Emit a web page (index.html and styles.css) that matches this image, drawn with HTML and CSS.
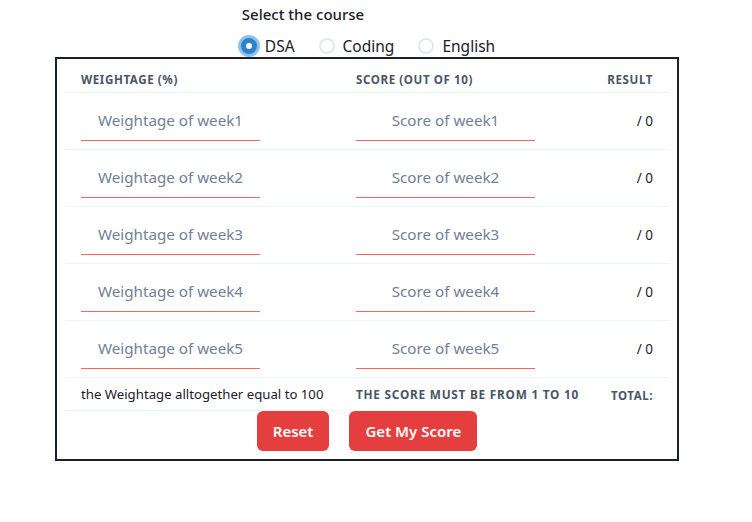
FILE: index.html
```html
<!DOCTYPE html>
<html lang="en">
<head>
<meta charset="utf-8">
<title>Score</title>
<link rel="stylesheet" href="styles.css">
</head>
<body>
<div class="page">
  <div class="course">
    <p class="course-title">Select the course</p>
    <div class="radios">
      <label class="radio"><span class="dot checked"></span><span>DSA</span></label>
      <label class="radio"><span class="dot"></span><span>Coding</span></label>
      <label class="radio"><span class="dot"></span><span>English</span></label>
    </div>
  </div>
  <div class="box">
    <table class="grid">
      <thead>
        <tr>
          <th class="c1">Weightage (%)</th>
          <th class="c2">Score (out of 10)</th>
          <th class="c3">Result</th>
        </tr>
      </thead>
      <tbody>
        <tr>
          <td><input class="field" placeholder="Weightage of week1"></td>
          <td><input class="field" placeholder="Score of week1"></td>
          <td class="res">/ 0</td>
        </tr>
        <tr>
          <td><input class="field" placeholder="Weightage of week2"></td>
          <td><input class="field" placeholder="Score of week2"></td>
          <td class="res">/ 0</td>
        </tr>
        <tr>
          <td><input class="field" placeholder="Weightage of week3"></td>
          <td><input class="field" placeholder="Score of week3"></td>
          <td class="res">/ 0</td>
        </tr>
        <tr>
          <td><input class="field" placeholder="Weightage of week4"></td>
          <td><input class="field" placeholder="Score of week4"></td>
          <td class="res">/ 0</td>
        </tr>
        <tr>
          <td><input class="field" placeholder="Weightage of week5"></td>
          <td><input class="field" placeholder="Score of week5"></td>
          <td class="res">/ 0</td>
        </tr>
      </tbody>
      <tfoot>
        <tr>
          <td class="note">the Weightage alltogether equal to 100</td>
          <td class="rule">The score must be from 1 to 10</td>
          <td class="total">Total:</td>
        </tr>
      </tfoot>
    </table>
    <div class="actions">
      <button class="btn">Reset</button>
      <button class="btn">Get My Score</button>
    </div>
  </div>
</div>
</body>
</html>
```

FILE: styles.css
```css
* { box-sizing: border-box; }
html, body { margin: 0; padding: 0; background: #fff; }
body {
  font-family: "Noto Sans", "Open Sans", sans-serif;
  color: #1a202c;
}
.page {
  width: 734px;
  display: flex;
  flex-direction: column;
  align-items: center;
}
.course {
  display: flex;
  flex-direction: column;
  align-items: flex-start;
  margin-top: 3px;
}
.course-title {
  margin: 0 0 0 3px;
  font-size: 15px;
  font-weight: 500;
  line-height: 22px;
}
.radios {
  display: flex;
  gap: 22px;
  margin-top: 11px;
  height: 20px;
  align-items: center;
}
.radio {
  display: flex;
  align-items: center;
  gap: 8px;
  font-size: 15.5px;
}
.dot {
  width: 16px;
  height: 16px;
  border-radius: 50%;
  border: 2px solid #e2e8f0;
  background: #fff;
  margin-left: 2px;
}
.dot.checked {
  background: #3182ce;
  border-color: #3182ce;
  box-shadow: 0 0 0 3px rgba(66, 153, 225, 0.6);
  position: relative;
}
.dot.checked::after {
  content: "";
  position: absolute;
  left: 50%;
  top: 50%;
  width: 6px;
  height: 6px;
  margin: -3px 0 0 -3px;
  border-radius: 50%;
  background: #fff;
}
.box {
  margin-top: 1px;
  width: 624px;
  border: 2px solid #1a202c;
  padding: 0 8px 8px;
  display: flex;
  flex-direction: column;
  align-items: center;
}
.grid {
  width: 604px;
  border-collapse: collapse;
  table-layout: fixed;
}
.grid th {
  font-size: 11.6px;
  font-weight: 700;
  text-transform: uppercase;
  letter-spacing: 0.05em;
  color: #4a5568;
  height: 33px;
  padding: 8px 16px 0;
  border-bottom: 1px solid #edf2f7;
  white-space: nowrap;
}
.c1 { width: 275px; text-align: left; }
.c2 { width: 250px; text-align: left; }
.c3 { text-align: right; }
.grid td {
  padding: 8px 16px;
  border-bottom: 1px solid #edf2f7;
  height: 57px;
}
.field {
  display: block;
  width: 179px;
  height: 40px;
  border: 0;
  border-bottom: 1px solid #f56565;
  font-family: inherit;
  font-size: 15.2px;
  text-align: center;
  background: transparent;
  padding: 0;
  outline: none;
}
.field::placeholder { color: #718096; }
.res {
  text-align: right;
  font-size: 13.5px;
}
.grid tfoot td {
  height: 33px;
  padding: 0 16px;
}
.grid tfoot td.rule, .grid tfoot td.total { border-bottom: 0; }
.note { font-size: 13.2px; white-space: nowrap; }
.rule {
  font-size: 11.8px;
  font-weight: 700;
  text-transform: uppercase;
  letter-spacing: 0.065em;
  color: #4a5568;
  white-space: nowrap;
}
.total {
  font-size: 11.5px;
  font-weight: 700;
  text-transform: uppercase;
  letter-spacing: 0.05em;
  color: #4a5568;
  text-align: right;
  padding-top: 4px !important;
}
.actions {
  display: flex;
  gap: 20px;
  margin-top: 0;
}
.btn {
  height: 40px;
  padding: 0 16px;
  background: #e53e3e;
  color: #fff;
  border: 0;
  border-radius: 6px;
  font-family: inherit;
  font-size: 15px;
  font-weight: 600;
}
```
